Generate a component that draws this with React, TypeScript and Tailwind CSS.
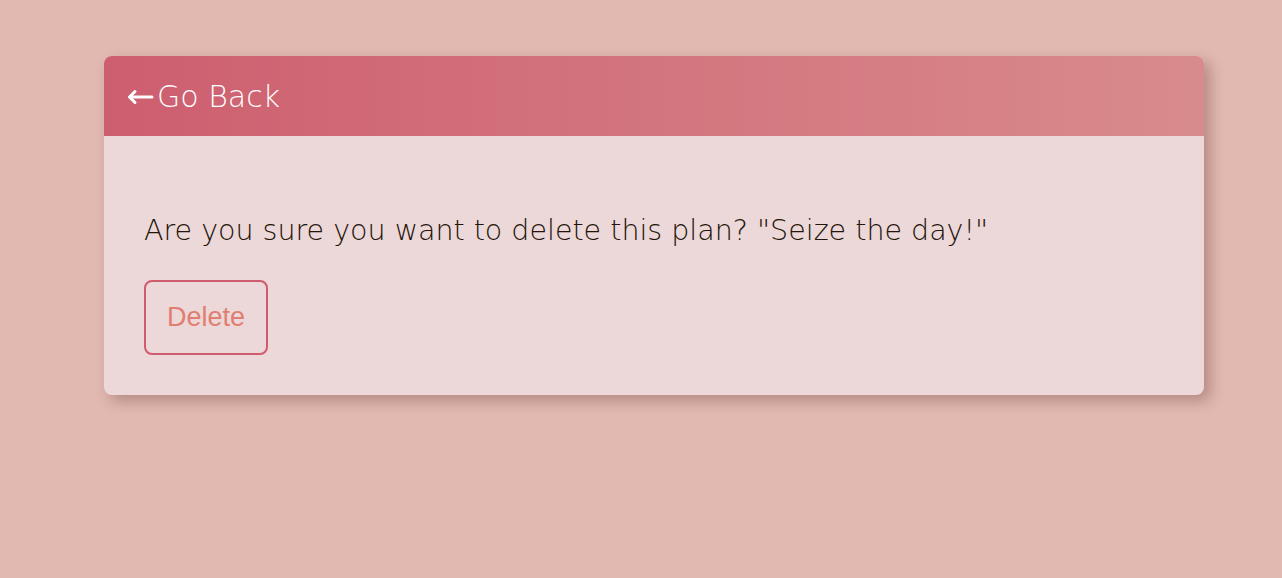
export default function App() {
  return (
    <div className="min-h-screen w-full bg-[#e1b9b0] pt-14 px-[104px]">
      <div className="w-[1100px] rounded-lg overflow-hidden bg-[#ecd8d8] shadow-[6px_6px_14px_rgba(80,30,30,0.3)]">
        <div className="h-20 flex items-center px-[23px] bg-gradient-to-r from-[#cd5e6f] to-[#d88b8d]">
          <button className="flex items-center text-white text-[30px] font-extralight font-['DejaVu_Sans',sans-serif] leading-none pt-[2px]">
            <svg width="27" height="16" viewBox="0 0 27 16" className="mr-[3px]" fill="none" stroke="white" strokeWidth="3" strokeLinecap="round" strokeLinejoin="round">
              <path d="M25 8H3" />
              <path d="M8 2.5L2.5 8L8 13.5" />
            </svg>
            Go Back
          </button>
        </div>
        <div className="px-10 pt-10 pb-10">
          <p className="mt-8 text-[#24140a] text-[28.5px] font-extralight leading-[45px] font-['DejaVu_Sans',sans-serif]">
            Are you sure you want to delete this plan? "Seize the day!"
          </p>
          <button className="mt-[27px] w-[124px] h-[75px] border-2 border-[#d05a6e] rounded-lg text-[#e07e72] text-[27px] font-['Liberation_Sans',Arial,sans-serif]">
            Delete
          </button>
        </div>
      </div>
    </div>
  );
}
